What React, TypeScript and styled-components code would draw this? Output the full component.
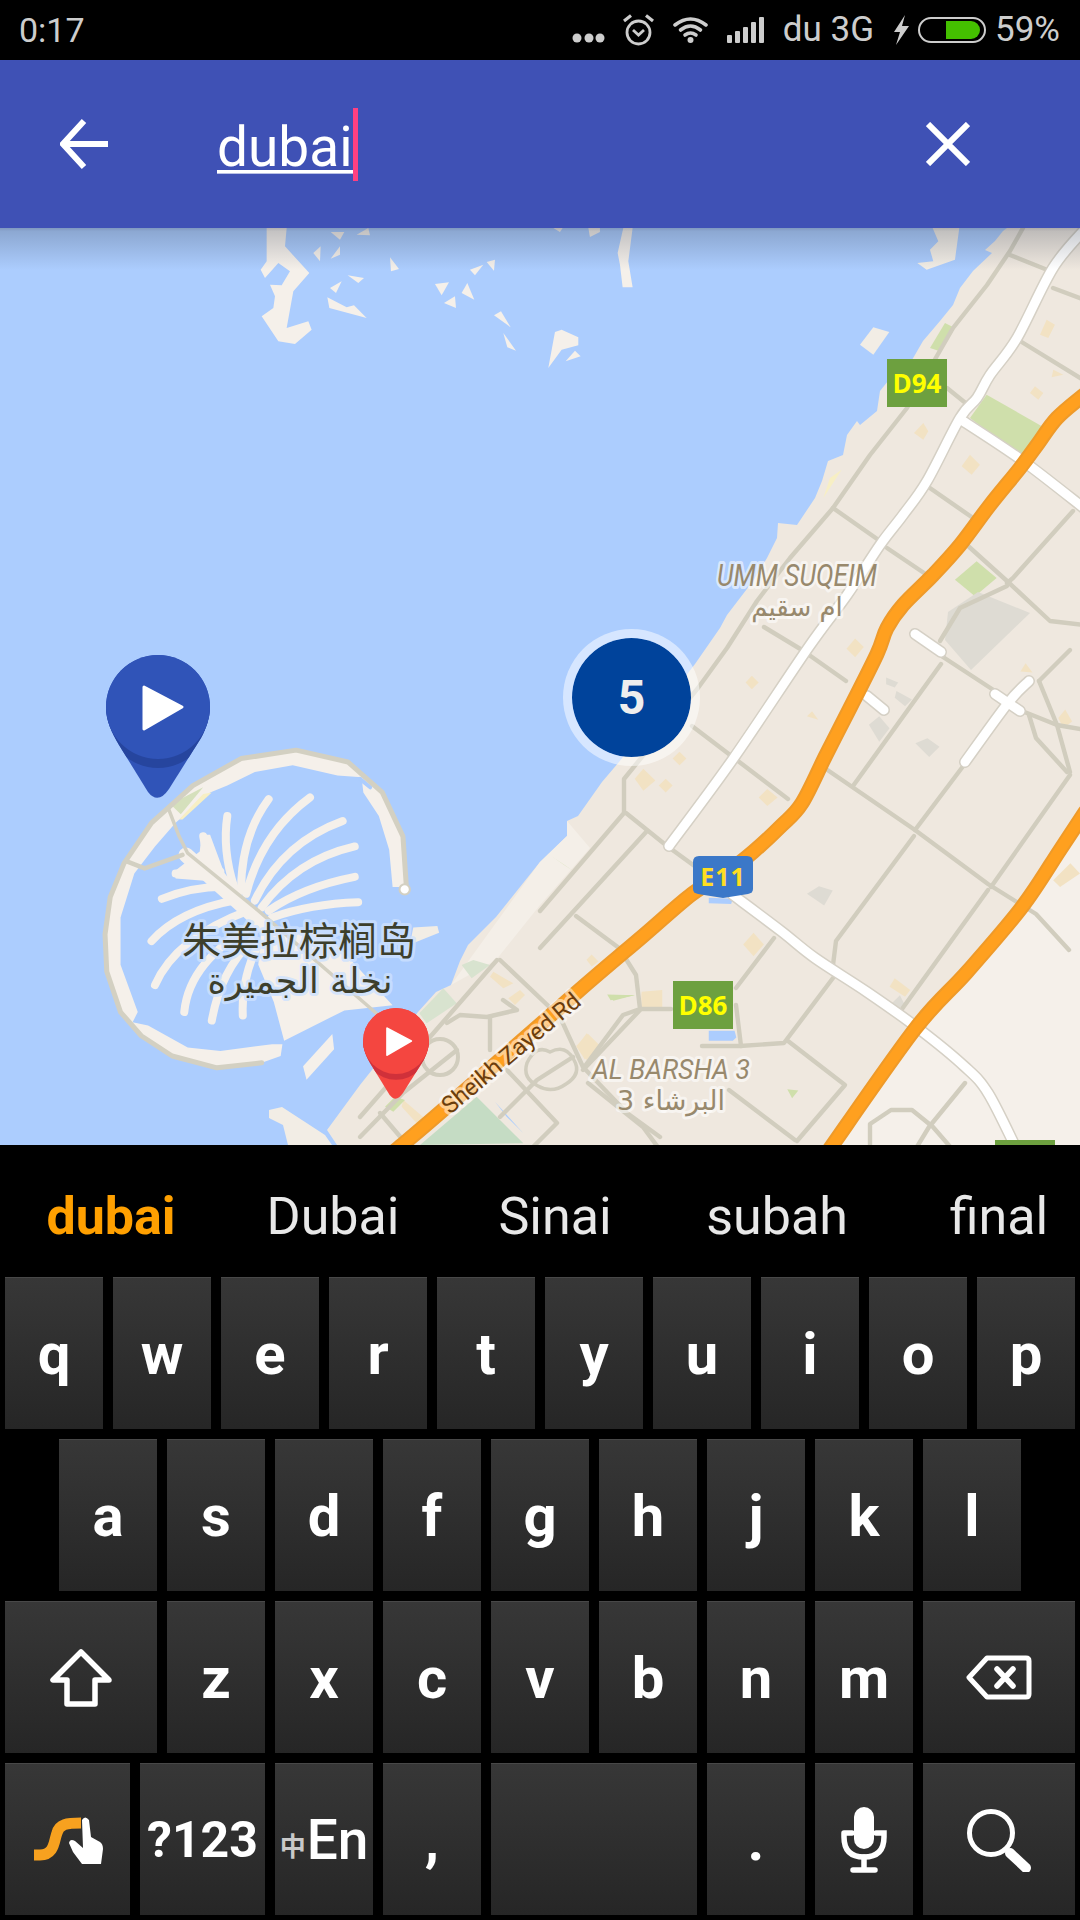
import React from "react";
import styled, { createGlobalStyle } from "styled-components";

const GlobalStyle = createGlobalStyle`
  html, body { margin: 0; padding: 0; background: #000; }
  body { font-family: Roboto, "Noto Sans", sans-serif; }
`;

const Page = styled.div`
  width: 1080px;
  height: 1920px;
  display: flex;
  flex-direction: column;
  overflow: hidden;
  background: #000;
`;

/* status bar */
const StatusBar = styled.div`
  height: 60px;
  flex: none;
  display: flex;
  align-items: center;
  justify-content: space-between;
  padding: 0 20px 0 19px;
  background: #000;
  color: #cdcdcd;
  font-size: 35px;
  line-height: 60px;
`;

const StatusRight = styled.div`
  display: flex;
  align-items: center;
  gap: 19px;
`;

const BatteryGroup = styled.div`
  display: flex;
  align-items: center;
  gap: 9px;
`;

const StatusText = styled.span<{ $size?: number }>`
  display: block;
  font-size: ${(p) => p.$size ?? 35}px;
`;

/* search bar */
const AppBar = styled.div`
  height: 168px;
  flex: none;
  display: flex;
  align-items: center;
  padding: 0 110px 0 60px;
  background: #3f51b5;
  position: relative;
  z-index: 2;
`;

const SearchField = styled.div`
  display: flex;
  align-items: center;
  margin-left: 109px;
  flex: 1;
`;

const SearchWord = styled.span`
  color: #fff;
  font-size: 55px;
  line-height: 46px;
  height: 46px;
  border-bottom: 3px solid #fff;
  box-shadow: 0 1px 0 #b9c0e4;
  margin-top: 8px;
`;

const Caret = styled.span`
  width: 5px;
  height: 73px;
  background: #ff4081;
`;

/* map */
const MapView = styled.div`
  position: relative;
  height: 917px;
  flex: none;
  overflow: hidden;
  background: #accdfe;
`;

const MapSvg = styled.svg`
  display: block;
  width: 1080px;
  height: 917px;
`;

const BarShadow = styled.div`
  position: absolute;
  left: 0;
  top: 0;
  right: 0;
  height: 42px;
  background: linear-gradient(rgba(40, 50, 70, 0.34), rgba(40, 50, 70, 0.24) 8%, rgba(40, 50, 70, 0));
`;

type Pos = { $x: number; $y: number };

const Shield = styled.div<Pos>`
  position: absolute;
  left: ${(p) => p.$x}px;
  top: ${(p) => p.$y}px;
  width: 60px;
  height: 48px;
  background: #6da03f;
  color: #ffff00;
  font-family: "Open Sans", sans-serif;
  font-weight: 700;
  font-size: 26px;
  display: flex;
  align-items: center;
  justify-content: center;
`;

const RouteBadge = styled.div<Pos>`
  position: absolute;
  left: ${(p) => p.$x}px;
  top: ${(p) => p.$y}px;
  width: 60px;
  height: 42px;
  background: #3b78c8;
  color: #ffdd22;
  font-family: "Open Sans", sans-serif;
  font-weight: 700;
  font-size: 25px;
  letter-spacing: 1px;
  display: flex;
  align-items: center;
  justify-content: center;
  padding-bottom: 2px;
  box-sizing: border-box;
  clip-path: path("M6 0H54Q60 0 60 6V33Q60 37 55 38L30 42L5 38Q0 37 0 33V6Q0 0 6 0Z");
`;

const Cluster = styled.div<Pos>`
  position: absolute;
  left: ${(p) => p.$x}px;
  top: ${(p) => p.$y}px;
  width: 119px;
  height: 119px;
  box-sizing: content-box;
  border: 9px solid rgba(255, 255, 255, 0.5);
  border-radius: 50%;
  background: #00439b padding-box;
  color: #eeeeee;
  font-size: 48px;
  font-weight: 700;
  display: flex;
  align-items: center;
  justify-content: center;
`;

const PinBox = styled.svg<Pos & { $w: number }>`
  position: absolute;
  left: ${(p) => p.$x}px;
  top: ${(p) => p.$y}px;
  width: ${(p) => p.$w}px;
  overflow: visible;
`;

const LandLabel = styled.text<{ $c: string; $halo: string; $size: number; $font?: string; $italic?: boolean }>`
  fill: ${(p) => p.$c};
  stroke: ${(p) => p.$halo};
  stroke-width: 6px;
  stroke-linejoin: round;
  paint-order: stroke;
  font-size: ${(p) => p.$size}px;
  font-family: ${(p) => p.$font ?? "Roboto, sans-serif"};
  font-style: ${(p) => (p.$italic ? "italic" : "normal")};
`;

const RoadLine = styled.polyline<{ $c: string; $w: number }>`
  fill: none;
  stroke: ${(p) => p.$c};
  stroke-width: ${(p) => p.$w}px;
  stroke-linejoin: round;
  stroke-linecap: round;
  vector-effect: non-scaling-stroke;
`;

const Curve = styled.path<{ $c: string; $w: number }>`
  fill: none;
  stroke: ${(p) => p.$c};
  stroke-width: ${(p) => p.$w}px;
  stroke-linejoin: round;
  stroke-linecap: round;
  vector-effect: non-scaling-stroke;
`;

/* keyboard */
const Keyboard = styled.div`
  flex: 1;
  display: flex;
  flex-direction: column;
  background: #000;
`;

const Candidates = styled.div`
  height: 132px;
  flex: none;
  display: grid;
  grid-template-columns: repeat(5, 222px);
  align-items: center;
  padding-top: 12px;
  box-sizing: border-box;
  overflow: hidden;
`;

const Candidate = styled.span<{ $active?: boolean }>`
  text-align: center;
  font-size: 52px;
  line-height: 60px;
  font-weight: ${(p) => (p.$active ? 700 : 400)};
  color: ${(p) => (p.$active ? "#ffa000" : "#e8e8e8")};
`;

const KeyRows = styled.div`
  display: flex;
  flex-direction: column;
  gap: 10px;
`;

const KeyRow = styled.div`
  display: flex;
  justify-content: center;
  gap: 10px;
`;

const Key = styled.div<{ $w?: number; $size?: number; $weight?: number }>`
  width: ${(p) => p.$w ?? 98}px;
  height: 152px;
  box-sizing: border-box;
  flex: none;
  display: flex;
  align-items: center;
  justify-content: center;
  background: linear-gradient(#373737, #262626);
  border-top: 1px solid #484848;
  color: #fff;
  font-size: ${(p) => p.$size ?? 58}px;
  font-weight: ${(p) => p.$weight ?? 700};
`;

const ZhMark = styled.span`
  font-family: "Noto Sans CJK SC", sans-serif;
  font-size: 26px;
  font-weight: 700;
  color: #c9c9c9;
  align-self: flex-end;
  line-height: 26px;
  margin: 0 1px 57px 0;
`;

// turns "x,y x,y" into a rounded path so the main roads bend instead of kinking
const smooth = (points: string) => {
  const p = points.split(" ").map((s) => s.split(",").map(Number));
  let d = `M${p[0][0]} ${p[0][1]}`;
  for (let i = 0; i < p.length - 1; i++) {
    const a = p[i - 1] || p[i];
    const b = p[i];
    const c = p[i + 1];
    const e = p[i + 2] || c;
    d += `C${b[0] + (c[0] - a[0]) / 6} ${b[1] + (c[1] - a[1]) / 6} ${c[0] - (e[0] - b[0]) / 6} ${c[1] - (e[1] - b[1]) / 6} ${c[0]} ${c[1]}`;
  }
  return d;
};

/* map data, page coordinates */
const COAST =
  "1007,228 1003,231 995,241 985,250 992,253 973,271 960,288 953,305 940,321 923,341 912,360 888,381 880,391 877,411 860,425 857,421 847,435 843,455 828,461 822,481 815,498 797,525 778,523 777,538 767,558 753,581 727,615 720,628 695,664 619,762 602,782 578,816 567,821 567,836 540,862 496,917 468,945 460,961 451,985 436,992 418,1012 360,1085 327,1130 337,1145 1080,1145 1080,228";

const HIGHWAY_A =
  "1085,394 1057,418 1037,445 1020,468 990,505 960,545 933,575 903,605 887,628 877,654 850,708 826,755 802,803 781,826 753,852 726,873 692,894 643,936 575,994 443,1110 396,1150";
const HIGHWAY_B = "1085,812 1060,850 1022,907 967,972 915,1029 829,1150";

const WHITE_ROADS = [
  "1085,229 1053,268 1017,338 990,375 977,398 960,418 927,481 903,515 880,545 847,595 808,648 733,759 669,846",
  "963,421 1023,461 1085,509",
  "733,895 781,931 815,958 867,992 919,1029 964,1066 988,1093 1017,1150",
  "915,634 941,652",
  "867,696 884,710",
  "965,762 1008,703 1029,681",
  "995,694 1020,711",
];

const GREY_ROADS = [
  "1023,228 1010,251 987,285 953,328 907,408 870,455 833,508 790,558 757,601 727,648 698,688 624,779 624,813 540,911",
  "1010,255 1050,271",
  "1053,288 1085,300",
  "1020,341 1085,381",
  "947,388 968,405",
  "833,508 880,541",
  "887,548 927,575",
  "927,486 973,518",
  "1073,511 1013,578 1007,583",
  "967,545 1007,581 1050,621 1085,625",
  "1007,586 960,608 940,641",
  "764,627 802,650 846,681",
  "626,813 667,846 700,870",
  "692,726 788,799",
  "826,769 915,830 988,884 1036,914 1069,950",
  "853,786 941,664",
  "915,830 964,765",
  "914,836 836,941 833,965",
  "991,887 1070,775",
  "902,1009 988,890",
  "943,657 995,691 1022,711 1057,725 1085,730",
  "1039,681 1057,725 1070,772",
  "1029,715 1036,738 1067,772",
  "1039,681 1070,650",
  "774,938 736,988",
  "833,978 784,1043 740,1046 702,1046",
  "788,1041 845,1085 797,1141",
  "540,948 647,831",
  "576,916 619,948 636,975 640,1009 623,1015 585,1066",
  "640,1009 671,1009",
  "736,1005 741,1046",
  "588,1083 643,1127 660,1150",
  "729,1090 795,1140",
  "965,1083 929,1127 915,1150",
  "870,1150 870,1124 891,1110 912,1110 933,1127 953,1150",
  "497,960 430,1037 360,1117",
  "500,960 560,1017 583,1067 627,1113 660,1137",
  "447,1023 460,1015 487,1017 517,1010 503,1000",
  "490,1017 490,1050",
  "500,1117 537,1080 573,1057",
  "507,1070 557,1123 530,1150",
  "583,1070 640,1010",
  "360,1137 403,1093 457,1050",
  "380,1113 403,1140",
];

/* islets, traced at 3x from the top of the map */
const ISLETS = [
  "80,0 140,0 135,55 208,135 160,190 140,300 205,280 215,305 165,348 115,340 65,265 100,240 105,205 90,170 125,172 150,130 115,105 75,150 62,125 80,100",
  "1150,0 1178,0 1165,100 1178,178 1148,178 1140,110 1133,75",
  "272,12 313,12 300,35",
  "350,20 385,0 390,22",
  "940,0 968,0 960,12",
  "1045,0 1080,0 1080,12 1050,27",
  "220,75 242,55 240,100",
  "272,92 300,55 300,80",
  "450,88 477,123 453,130",
  "323,142 372,150 355,165",
  "270,180 305,160 288,195",
  "262,208 320,238 342,232 380,270 268,240",
  "585,168 627,163 605,202",
  "612,225 645,205 648,240",
  "665,195 682,165 703,215",
  "690,125 730,110 705,142",
  "740,102 765,95 762,128",
  "762,262 783,250 812,298",
  "790,315 828,368 802,358",
  "925,420 945,312 965,305 1015,328 1015,352 965,365",
  "977,400 1005,368 1022,385",
];

const NE_LAND = ["878,0 958,0 945,95 860,125 832,105 880,100 870,65 895,40", "660,350 700,298 748,312 700,380"];

const NE_PARKS = [
  "1040,500 1215,600 1150,690 990,570",
  "915,285 945,300 900,370 870,360",
  "1010,1000 1070,1050 1005,1105 945,1055",
];

const NE_SAND = [
  "1220,275 1245,290 1225,330 1200,320",
  "850,585 865,610 850,635 822,615",
  "990,680 1020,710 995,740 965,715",
  "1185,475 1210,495 1195,515 1170,495",
  "1240,425 1270,440 1235,448",
];

const SE_SAND = [
  "300,440 335,475 300,505 275,470",
  "405,390 425,410 405,430 385,410",
  "365,470 385,490 365,510 345,490",
  "660,500 690,525 660,550 635,525",
  "615,165 635,185 615,205 597,185",
  "620,925 650,960 620,995 590,960",
  "915,55 940,80 915,110 890,85",
  "1030,1060 1075,1095 1060,1115 1015,1085",
  "1525,265 1545,300 1520,320 1505,290",
  "1540,720 1568,750 1510,790 1490,770",
  "295,1100 355,1095 355,1145 295,1145",
  "140,1225 175,1260 130,1300 105,1260",
  "150,990 170,1010 150,1025 135,1005",
  "790,270 808,295 775,285",
  "1410,128 1430,155 1395,152",
];

const SE_BUILDINGS = [
  "1005,170 1040,185 1030,200 1005,190",
  "1035,210 1080,235 1060,255 1030,230",
  "955,310 985,285 1015,320 985,360",
  "1090,365 1125,350 1160,375 1130,405",
  "775,810 810,788 850,800 825,845",
  "1020,1135 1045,1110 1060,1140 1040,1150",
];

const SW_FRONDS = [
  "M660 580 Q645 680 680 790",
  "M780 530 Q700 640 700 800",
  "M900 525 Q760 630 715 810",
  "M995 595 Q820 660 740 830",
  "M1030 670 Q860 710 760 850",
  "M1030 760 Q880 790 780 860",
  "M1040 835 Q900 840 790 880",
  "M510 750 L640 745",
  "M590 640 Q600 720 690 810",
  "M470 825 Q570 785 670 790",
  "M440 950 Q520 860 680 830",
  "M450 1080 Q510 940 720 860",
  "M535 1160 Q550 1000 760 890",
  "M615 1185 Q640 1040 730 950",
  "M705 1170 Q700 1060 750 960",
];

const PIN_PATH =
  "M52 0A52 52 0 0 1 104 52C104 62 100 74 95 83L63 134Q52 150 42 137L13 90C6 78 0 66 0 52A52 52 0 0 1 52 0Z";

const Pin = ({ x, y, w, body, shade, id }: { x: number; y: number; w: number; body: string; shade: string; id: string }) => (
  <PinBox $x={x} $y={y} $w={w} viewBox="0 0 104 145">
    <clipPath id={id}>
      <path d={PIN_PATH} />
    </clipPath>
    <path d={PIN_PATH} fill={body} />
    <circle cx="52" cy="61" r="52" fill={shade} clipPath={`url(#${id})`} />
    <circle cx="52" cy="52" r="52" fill={body} />
    <path d="M38 32L76 52L38 74Z" fill="#fff" stroke="#fff" strokeWidth="3" strokeLinejoin="round" />
  </PinBox>
);

const MapDrawing = () => (
  <MapSvg viewBox="0 228 1080 917">
    {/* land */}
    <polygon points={COAST} fill="#efe8df" />
    <polygon points="1085,810 1060,850 1022,907 967,972 915,1029 829,1150 1085,1150" fill="#f5f0ea" />
    <polygon points="540,862 567,836 567,821 590,848 540,905 496,960 451,985" fill="#f4efe8" />
    <polygon points="269,1110 282,1107 325,1135 332,1145 288,1145 283,1125 269,1118" fill="#f2ede5" />

    <g transform="translate(240 228) scale(0.3333)" fill="#f5f0ea">
      {ISLETS.map((p) => (
        <polygon key={p} points={p} />
      ))}
    </g>

    <g transform="translate(640 228) scale(0.3333)">
      {NE_LAND.map((p) => (
        <polygon key={p} points={p} fill="#f2ede5" />
      ))}
      {NE_PARKS.map((p) => (
        <polygon key={p} points={p} fill="#cfdfab" />
      ))}
      {NE_SAND.map((p) => (
        <polygon key={p} points={p} fill="#f2e2c3" />
      ))}
      <polygon points="605,725 550,810 570,750" fill="#f7efc4" />
    </g>
    <polygon points="978,592 1030,613 971,670 945,640 948,612" fill="#dedbd3" />

    {/* coast greens and sand by the palm */}
    <g transform="translate(360 960) scale(0.3333)">
      <polygon points="350,410 490,550 180,555" fill="#c5dcc4" />
      <polygon points="250,85 290,130 200,190 178,160" fill="#d8e3cf" />
      <polygon points="340,0 390,15 335,55 305,15" fill="#d8e3cf" />
      <polygon points="400,35 460,70 430,85 390,50" fill="#f2e2c3" />
      <polygon points="480,90 495,105 465,135 445,115" fill="#f2e2c3" />
      <polygon points="680,220 720,260 680,300 650,260" fill="#f2e2c3" />
      <polygon points="845,100 900,95 900,140 845,145" fill="#f2e2c3" />
      <polygon points="130,420 200,480 175,495 125,440" fill="#f2e2c3" />
      <polygon points="105,410 135,420 100,455 75,440" fill="#cfdfab" />
      <polygon points="405,425 490,520 440,470" fill="#accdfe" />
      <polygon points="745,105 825,105 760,122" fill="#cfdfab" />
    </g>

    <g transform="translate(540 620) scale(0.3444 0.338)">
      {SE_SAND.map((p) => (
        <polygon key={p} points={p} fill="#f2e2c3" />
      ))}
      {SE_BUILDINGS.map((p) => (
        <polygon key={p} points={p} fill="#dedbd3" />
      ))}
      <polygon points="490,1215 565,1215 570,1235 560,1245 490,1245" fill="#accdfe" />
      <polygon points="490,822 560,825 555,840 490,838" fill="#accdfe" />
      <polygon points="35,700 100,745 70,725" fill="#cfdfab" />
      <polygon points="195,1108 275,1110 205,1125" fill="#cfdfab" />
      <polygon points="718,1388 750,1392 732,1415" fill="#cfdfab" />
    </g>

    {/* palm */}
    <g transform="translate(0 620) scale(0.3444 0.338)">
      <polygon
        points="1180,790 1170,640 1110,510 1010,420 860,385 700,410 560,490 440,600 360,720 320,820 305,930 310,1040 350,1160 410,1230 500,1290 630,1325 760,1310 815,1290 820,1255 790,1255 640,1275 545,1265 430,1200 385,1190 400,1160 350,1020 350,880 390,750 450,670 510,600 610,510 660,490 740,450 850,430 980,460 1050,465 1055,510 1100,580 1130,680 1140,790"
        fill="#f5f0ea"
      />
      <Curve d="M1045 470L1075 495" $c="#accdfe" $w={4} />
      <polygon points="760,900 950,930 1140,1140 1000,1155 825,1245 795,1130 750,1020" fill="#f5f0ea" />
      <polygon points="965,1225 970,1270 890,1360 880,1320" fill="#f5f0ea" />
      <polygon points="1200,910 1270,905 1275,925 1190,960" fill="#f2ede5" />
      <polygon points="505,745 580,685 585,635 610,635 650,745 640,775 510,765" fill="#f5f0ea" />
      {SW_FRONDS.map((d) => (
        <Curve key={d} d={d} $c="#f5f0ea" $w={8} />
      ))}
      <Curve d="M540 695L790 925" $c="#f5f0ea" $w={15} />
      <polygon points="495,545 590,495 525,575" fill="#d5e0bc" />
      <polygon points="590,515 615,510 530,590 520,590" fill="#f7efc4" />
      <Curve
        d="M1180 790L1170 640L1110 510L1010 420L860 385L700 410L560 490L440 600L360 720L320 820L305 930L310 1040L350 1160L410 1230L500 1290L630 1325L760 1310"
        $c="#d3d0c2"
        $w={5}
      />
      <Curve d="M490 560L520 640L545 690L750 860L1100 1170" $c="#d3d0c2" $w={3.5} />
      <Curve d="M370 715L420 735L530 695" $c="#d3d0c2" $w={4.5} />
      <circle cx="1175" cy="797" r="15" fill="#fff" stroke="#d3d0c2" strokeWidth="6" />
    </g>

    {GREY_ROADS.map((p) => (
      <RoadLine key={p} points={p} $c="#d1cdbe" $w={4.4} />
    ))}

    {/* small loops near the coast */}
    <circle cx="440" cy="1057" r="18" fill="none" stroke="#d1cdbe" strokeWidth="4" />
    <Curve
      d="M527 1063Q536 1044 550 1052Q566 1044 574 1060Q582 1074 566 1084Q552 1094 538 1086Q522 1078 527 1063Z"
      $c="#d1cdbe"
      $w={3.5}
    />

    {WHITE_ROADS.map((p) => (
      <Curve key={`c${p}`} d={smooth(p)} $c="#d5d0c5" $w={12} />
    ))}
    {WHITE_ROADS.map((p) => (
      <Curve key={p} d={smooth(p)} $c="#ffffff" $w={9} />
    ))}

    <Curve d={smooth(HIGHWAY_A)} $c="#ee9a2a" $w={15} />
    <Curve d={smooth(HIGHWAY_A)} $c="#ffa01f" $w={11} />
    <Curve d={smooth(HIGHWAY_B)} $c="#ee9a2a" $w={15} />
    <Curve d={smooth(HIGHWAY_B)} $c="#ffa01f" $w={11} />

    {/* labels */}
    <LandLabel x="717" y="586" $c="#98896d" $halo="rgba(255,255,255,0.55)" $size={32} $italic textLength={160} lengthAdjust="spacingAndGlyphs">
      UMM SUQEIM
    </LandLabel>
    <LandLabel x="797" y="616" $c="#98896d" $halo="rgba(255,255,255,0.55)" $size={26} $font={'"DejaVu Sans", sans-serif'} textAnchor="middle" direction="rtl">
      ام سقيم
    </LandLabel>
    <LandLabel x="592" y="1079" $c="#98896d" $halo="rgba(255,255,255,0.55)" $size={28} $italic textLength={158} lengthAdjust="spacingAndGlyphs">
      AL BARSHA 3
    </LandLabel>
    <LandLabel x="671" y="1110" $c="#98896d" $halo="rgba(255,255,255,0.55)" $size={27} $font={'"DejaVu Sans", sans-serif'} textAnchor="middle" direction="rtl">
      البرشاء 3
    </LandLabel>
    <LandLabel x="299" y="955" $c="#3d3f2c" $halo="rgba(205,225,255,0.8)" $size={39} $font={'"Noto Sans CJK SC", sans-serif'} textAnchor="middle">
      朱美拉棕榈岛
    </LandLabel>
    <LandLabel x="300" y="993" $c="#3d3f2c" $halo="rgba(205,225,255,0.8)" $size={35} $font={'"DejaVu Sans", sans-serif'} textAnchor="middle" direction="rtl">
      نخلة الجميرة
    </LandLabel>
    <LandLabel
      transform="translate(450 1115) rotate(-40)"
      $c="#6b3d0c"
      $halo="rgba(255,255,255,0.5)"
      $size={24}
      textLength={173}
    >
      Sheikh Zayed Rd
    </LandLabel>
  </MapSvg>
);

const BackIcon = () => (
  <svg width="48" height="52" viewBox="0 0 48 52" fill="none" stroke="#fff" strokeWidth="6">
    <path d="M48 26H5" />
    <path d="M24 3L3 26L24 49" />
  </svg>
);

const CloseIcon = () => (
  <svg width="44" height="44" viewBox="0 0 44 44" fill="none" stroke="#fff" strokeWidth="6">
    <path d="M2 2L42 42M42 2L2 42" />
  </svg>
);

const App = () => (
  <Page>
    <GlobalStyle />
    <StatusBar>
      <StatusText $size={34}>0:17</StatusText>
      <StatusRight>
        <svg width="31" height="32" viewBox="0 0 31 10" overflow="visible" fill="#cdcdcd">
          <circle cx="4" cy="13" r="4.5" />
          <circle cx="16" cy="13" r="4.5" />
          <circle cx="27" cy="13" r="4.5" />
        </svg>
        <svg width="31" height="32" viewBox="0 0 31 32" fill="none" stroke="#cdcdcd" strokeWidth="2.8">
          <circle cx="15.5" cy="18.5" r="11.5" />
          <path d="M10 16L15.5 21L21 16" />
          <path d="M1 7L8 1.5M30 7L23 1.5" strokeWidth="3.2" />
        </svg>
        <svg width="35" height="26" viewBox="0 0 35 26" fill="none" stroke="#cdcdcd" strokeWidth="3.6" strokeLinecap="round">
          <circle cx="17.5" cy="23" r="3" fill="#cdcdcd" stroke="none" />
          <path d="M2 8Q17.5 -4 33 8" />
          <path d="M7.5 13Q17.5 5 27.5 13" />
          <path d="M12 18Q17.5 14 23 18" />
        </svg>
        <svg width="37" height="26" viewBox="0 0 37 26" fill="#cdcdcd">
          <rect x="0" y="18" width="5" height="8" rx="1" />
          <rect x="8" y="14" width="5" height="12" rx="1" />
          <rect x="16" y="10" width="5" height="16" rx="1" />
          <rect x="24" y="5" width="5" height="21" rx="1" />
          <rect x="32" y="0" width="5" height="26" rx="1" />
        </svg>
        <StatusText>du 3G</StatusText>
        <BatteryGroup>
          <svg width="16" height="30" viewBox="0 0 16 30" fill="#cdcdcd">
            <polygon points="12,0 1,17 7,17 3,30 16,11 9,11" />
          </svg>
          <svg width="68" height="26" viewBox="0 0 68 26">
            <rect x="1" y="1" width="66" height="24" rx="12" fill="none" stroke="#cdcdcd" strokeWidth="2" />
            <path d="M28 4H53A9 9 0 0 1 53 22H28Z" fill="#44c000" />
          </svg>
          <StatusText>59%</StatusText>
        </BatteryGroup>
      </StatusRight>
    </StatusBar>

    <AppBar>
      <BackIcon />
      <SearchField>
        <SearchWord>dubai</SearchWord>
        <Caret />
      </SearchField>
      <CloseIcon />
    </AppBar>

    <MapView>
      <MapDrawing />
      <BarShadow />
      <Shield $x={887} $y={131}>D94</Shield>
      <Shield $x={673} $y={753}>D86</Shield>
      <Shield $x={995} $y={912} />
      <RouteBadge $x={693} $y={628}>E11</RouteBadge>
      <Cluster $x={563} $y={401}>5</Cluster>
      <Pin x={106} y={427} w={104} body="#3054b8" shade="#26459e" id="pinBlue" />
      <Pin x={363} y={780} w={66} body="#f44640" shade="#d0313a" id="pinRed" />
    </MapView>

    <Keyboard>
      <Candidates>
        <Candidate $active>dubai</Candidate>
        <Candidate>Dubai</Candidate>
        <Candidate>Sinai</Candidate>
        <Candidate>subah</Candidate>
        <Candidate>final</Candidate>
      </Candidates>
      <KeyRows>
        <KeyRow>
          {"qwertyuiop".split("").map((k) => (
            <Key key={k}>{k}</Key>
          ))}
        </KeyRow>
        <KeyRow>
          {"asdfghjkl".split("").map((k) => (
            <Key key={k}>{k}</Key>
          ))}
        </KeyRow>
        <KeyRow>
          <Key $w={152}>
            <svg width="62" height="58" viewBox="0 0 62 58" fill="none" stroke="#fff" strokeWidth="5.5" strokeLinejoin="round">
              <path d="M31 3L3 31H17V55H45V31H59Z" />
            </svg>
          </Key>
          {"zxcvbnm".split("").map((k) => (
            <Key key={k}>{k}</Key>
          ))}
          <Key $w={152}>
            <svg width="66" height="45" viewBox="0 0 66 45" fill="none" stroke="#fff" strokeWidth="5" strokeLinejoin="round">
              <path d="M3 22.5L21 3H60Q63 3 63 6V39Q63 42 60 42H21Z" />
              <path d="M31 14L47 31M47 14L31 31" strokeLinecap="round" strokeWidth="5.5" />
            </svg>
          </Key>
        </KeyRow>
        <KeyRow>
          <Key $w={125}>
            <svg width="74" height="50" viewBox="0 0 74 50">
              <path d="M3 40H9C24 40 23 25 26 18C28 9 36 8 50 8" fill="none" stroke="#f7a11f" strokeWidth="11" />
              <path d="M51 5Q54 0 58 5L60 22L69 27Q72 29 72 34L70 49H51L42 37L38 28Q39 23 44 26L52 33Z" fill="#fff" />
            </svg>
          </Key>
          <Key $w={125} $size={50}>?123</Key>
          <Key $size={55} $weight={500}>
            <ZhMark>中</ZhMark>En
          </Key>
          <Key>,</Key>
          <Key $w={206} />
          <Key>.</Key>
          <Key>
            <svg width="46" height="66" viewBox="0 0 46 66" fill="none" stroke="#fff" strokeWidth="5.5" strokeLinecap="round">
              <rect x="13" y="0" width="20" height="42" rx="10" fill="#fff" stroke="none" />
              <path d="M3 26V30Q3 50 23 50Q43 50 43 30V26H35M3 26H11" />
              <path d="M23 50V63M12 63H34" />
            </svg>
          </Key>
          <Key $w={152}>
            <svg width="64" height="64" viewBox="0 0 64 64" fill="none" stroke="#fff" strokeLinecap="round">
              <circle cx="24" cy="25" r="21.5" strokeWidth="5" />
              <path d="M43 45L59 60" strokeWidth="10" />
            </svg>
          </Key>
        </KeyRow>
      </KeyRows>
    </Keyboard>
  </Page>
);

export default App;
